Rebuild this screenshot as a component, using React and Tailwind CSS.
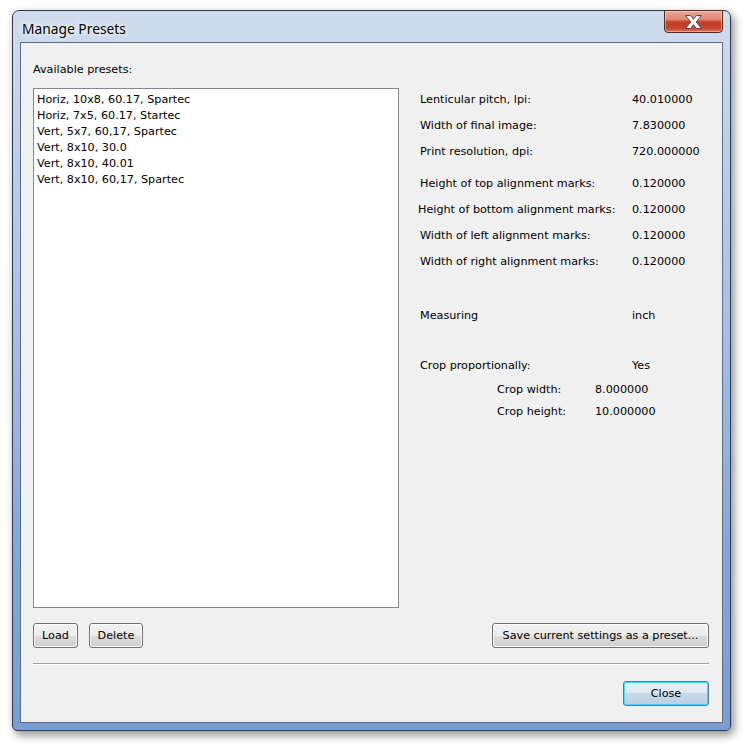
import React from 'react';

const ui = { fontFamily: '"DejaVu Sans", Verdana, sans-serif' };

const winBtn =
  'h-[25px] pt-[2px] rounded-[3px] border border-[#707070] bg-[linear-gradient(#f2f2f2_0%,#ebebeb_50%,#dddddd_50%,#cfcfcf_100%)] text-[11.2px] text-black shadow-[inset_0_0_0_1px_#fcfcfc] flex items-center justify-center';

const top = [
  ['Lenticular pitch, lpi:', '40.010000'],
  ['Width of final image:', '7.830000'],
  ['Print resolution, dpi:', '720.000000'],
];

const marks = [
  ['Height of top alignment marks:', '0.120000', false],
  ['Height of bottom alignment marks:', '0.120000', true],
  ['Width of left alignment marks:', '0.120000', false],
  ['Width of right alignment marks:', '0.120000', false],
];

const presets = [
  'Horiz, 10x8, 60.17, Spartec',
  'Horiz, 7x5, 60.17, Startec',
  'Vert, 5x7, 60,17, Spartec',
  'Vert, 8x10, 30.0',
  'Vert, 8x10, 40.01',
  'Vert, 8x10, 60,17, Spartec',
];

const Row = ({ label, value, shift }) => (
  <div className="h-[26px] flex items-center">
    <span className={`w-[214px] ${shift ? 'pl-0' : 'pl-[2px]'}`}>{label}</span>
    <span>{value}</span>
  </div>
);

export default function App() {
  return (
    <div className="w-[744px] h-[743px] bg-white pl-[12px] pt-[10px]" style={ui}>
      {/* ── Window frame ── */}
      <div className="w-[719px] h-[721px] flex flex-col rounded-t-[7px] rounded-b-[5px] border border-[#2b3a52] bg-[linear-gradient(#cfdcec_0%,#bccfe8_20%,#a6bfe4_45%,#86a6d6_75%,#7c9dd1_100%)] shadow-[3px_4px_10px_rgba(0,0,0,0.45)]">
        {/* Title bar */}
        <div className="h-[31px] flex items-start justify-between shrink-0">
          <span
            className="ml-[9px] mt-[8px] leading-[20px] text-[13.8px] text-black [text-shadow:0_0_8px_#ffffff,0_0_4px_#ffffff]"
            style={{ fontFamily: '"Noto Sans", "Open Sans", sans-serif' }}
          >
            Manage Presets
          </span>
          <div className="mr-[7px] w-[59px] h-[23px] -mt-px rounded-b-[4px] border border-[#5a2a22] bg-[linear-gradient(#eda898_0%,#de8872_40%,#c23f2a_52%,#c4432d_80%,#db7258_100%)] shadow-[inset_0_0_0_1px_rgba(255,220,210,0.5)] flex items-center justify-center">
            <svg width="19" height="14" viewBox="0 0 19 14">
              <path
                d="M1.5 0.5 H6.5 L9.5 4.3 L12.5 0.5 H17.5 L12.2 7 L17.5 13.5 H12.5 L9.5 9.7 L6.5 13.5 H1.5 L6.8 7 Z"
                fill="#ffffff"
                stroke="#5b4a48"
                strokeWidth="1"
                strokeLinejoin="round"
              />
            </svg>
          </div>
        </div>

        {/* Client area */}
        <div className="mx-[7px] h-[681px] border border-[#5c6d86] bg-[#f0f0f0] flex flex-col text-[11.2px] text-black pl-[12px] pr-[13px] pt-[20px]">
          <div className="flex">
            {/* Left column */}
            <div className="w-[366px] flex flex-col">
              <div className="leading-[14px]">Available presets:</div>
              <div className="mt-[11px] h-[520px] border border-[#828790] bg-white pl-[3px] pt-[3px]">
                {presets.map((p) => (
                  <div key={p} className="h-[16px] leading-[16px]">{p}</div>
                ))}
              </div>
            </div>

            {/* Right column */}
            <div className="ml-[19px] flex flex-col pt-[24px]">
              {top.map(([l, v]) => (
                <Row key={l} label={l} value={v} />
              ))}
              <div className="h-[6px]" />
              {marks.map(([l, v, s]) => (
                <Row key={l} label={l} value={v} shift={s} />
              ))}
              <div className="mt-[28px]">
                <Row label="Measuring" value="inch" />
              </div>
              <div className="mt-[24px]">
                <Row label="Crop proportionally:" value="Yes" />
              </div>
              <div className="h-[22px] flex items-center pl-[79px]">
                <span className="w-[98px]">Crop width:</span>
                <span>8.000000</span>
              </div>
              <div className="h-[22px] flex items-center pl-[79px]">
                <span className="w-[98px]">Crop height:</span>
                <span>10.000000</span>
              </div>
            </div>
          </div>

          {/* Buttons row */}
          <div className="mt-[15px] flex items-center">
            <button className={`${winBtn} w-[45px]`}>Load</button>
            <button className={`${winBtn} w-[54px] ml-[11px]`}>Delete</button>
            <button className={`${winBtn} w-[217px] ml-auto`}>Save current settings as a preset...</button>
          </div>

          {/* Separator */}
          <div className="mt-[15px] h-[2px] border-t border-[#a0a0a0] border-b border-b-white" />

          <div className="mt-[16px] flex justify-end">
            <button className="w-[86px] h-[25px] pt-[2px] rounded-[3px] border border-[#3c7fb1] bg-[linear-gradient(#eaf1f7_0%,#dfe8f0_50%,#c9d9e6_50%,#bccfe0_100%)] shadow-[inset_0_0_0_1px_#48d8fb] text-[11.2px] flex items-center justify-center">
              Close
            </button>
          </div>
        </div>
      </div>
    </div>
  );
}
